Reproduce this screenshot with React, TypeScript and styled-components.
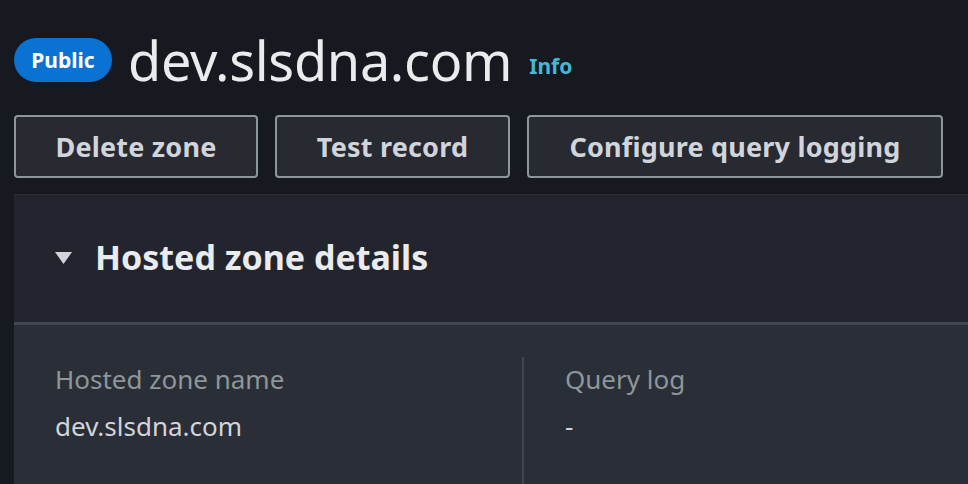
import React from 'react';
import styled, { createGlobalStyle } from 'styled-components';

const GlobalStyle = createGlobalStyle`
  html, body {
    margin: 0;
    padding: 0;
    background: #16191f;
    font-family: "Noto Sans", "Open Sans", sans-serif;
    overflow: hidden;
  }
`;

const Page = styled.div`
  width: 968px;
  height: 484px;
  padding-left: 14px;
  box-sizing: border-box;
  overflow: hidden;
`;

const TitleRow = styled.div`
  display: flex;
  align-items: center;
  height: 115px;
  padding-top: 5px;
  box-sizing: border-box;
`;

const Badge = styled.span`
  display: inline-flex;
  align-items: center;
  justify-content: center;
  width: 98px;
  height: 44px;
  border-radius: 22px;
  background: #0972d3;
  color: #ffffff;
  font-size: 21px;
  font-weight: 700;
  margin-right: 16px;
`;

const Title = styled.h1`
  margin: 0;
  font-size: 54px;
  font-weight: 400;
  color: #e9ebed;
  letter-spacing: -0.3px;
`;

const InfoLink = styled.a`
  color: #44b9d6;
  font-size: 21px;
  font-weight: 700;
  margin-left: 17px;
  margin-top: 12px;
  text-decoration: none;
`;

const Actions = styled.div`
  display: flex;
  gap: 17px;
  height: 79px;
`;

const Button = styled.button<{ $w: number }>`
  width: ${(p) => p.$w}px;
  height: 63px;
  box-sizing: border-box;
  border: 2px solid #8d9699;
  border-radius: 4px;
  background: #272a31;
  color: #d1d5db;
  font-family: inherit;
  font-size: 27px;
  font-weight: 700;
  letter-spacing: 0.2px;
  cursor: pointer;
`;

const Panel = styled.section`
  background: #2a2e36;
  border-top: 1px solid #2a2e36;
  height: 300px;
`;

const PanelHeader = styled.div`
  display: flex;
  align-items: center;
  gap: 22px;
  height: 130px;
  padding-left: 40px;
  padding-bottom: 3px;
  box-sizing: border-box;
  background: #22252d;
  border-bottom: 3px solid #414750;
`;

const Caret = styled.svg`
  width: 19px;
  height: 14px;
  margin-top: 2px;
`;

const PanelTitle = styled.h2`
  margin: 0;
  font-size: 34px;
  font-weight: 700;
  color: #e9ebed;
`;

const Columns = styled.div`
  display: grid;
  grid-template-columns: 508px 1fr;
  padding-top: 32px;
  height: 130px;
`;

const Column = styled.div<{ $divided?: boolean }>`
  padding-left: 41px;
  padding-top: 6px;
  ${(p) => (p.$divided ? 'border-left: 2px solid #414750;' : '')}
`;

const Label = styled.div`
  font-size: 26px;
  color: #8d9699;
  line-height: 32px;
`;

const Value = styled.div`
  font-size: 26px;
  color: #d1d5db;
  line-height: 32px;
  margin-top: 15px;
`;

export default function App() {
  return (
    <>
      <GlobalStyle />
      <Page>
        <TitleRow>
          <Badge>Public</Badge>
          <Title>dev.slsdna.com</Title>
          <InfoLink>Info</InfoLink>
        </TitleRow>
        <Actions>
          <Button $w={244}>Delete zone</Button>
          <Button $w={235}>Test record</Button>
          <Button $w={416}>Configure query logging</Button>
        </Actions>
        <Panel>
          <PanelHeader>
            <Caret viewBox="0 0 19 14">
              <path d="M1 1 H18 L9.5 13 Z" fill="#d1d5db" />
            </Caret>
            <PanelTitle>Hosted zone details</PanelTitle>
          </PanelHeader>
          <Columns>
            <Column>
              <Label>Hosted zone name</Label>
              <Value>dev.slsdna.com</Value>
            </Column>
            <Column $divided>
              <Label>Query log</Label>
              <Value>-</Value>
            </Column>
          </Columns>
        </Panel>
      </Page>
    </>
  );
}
